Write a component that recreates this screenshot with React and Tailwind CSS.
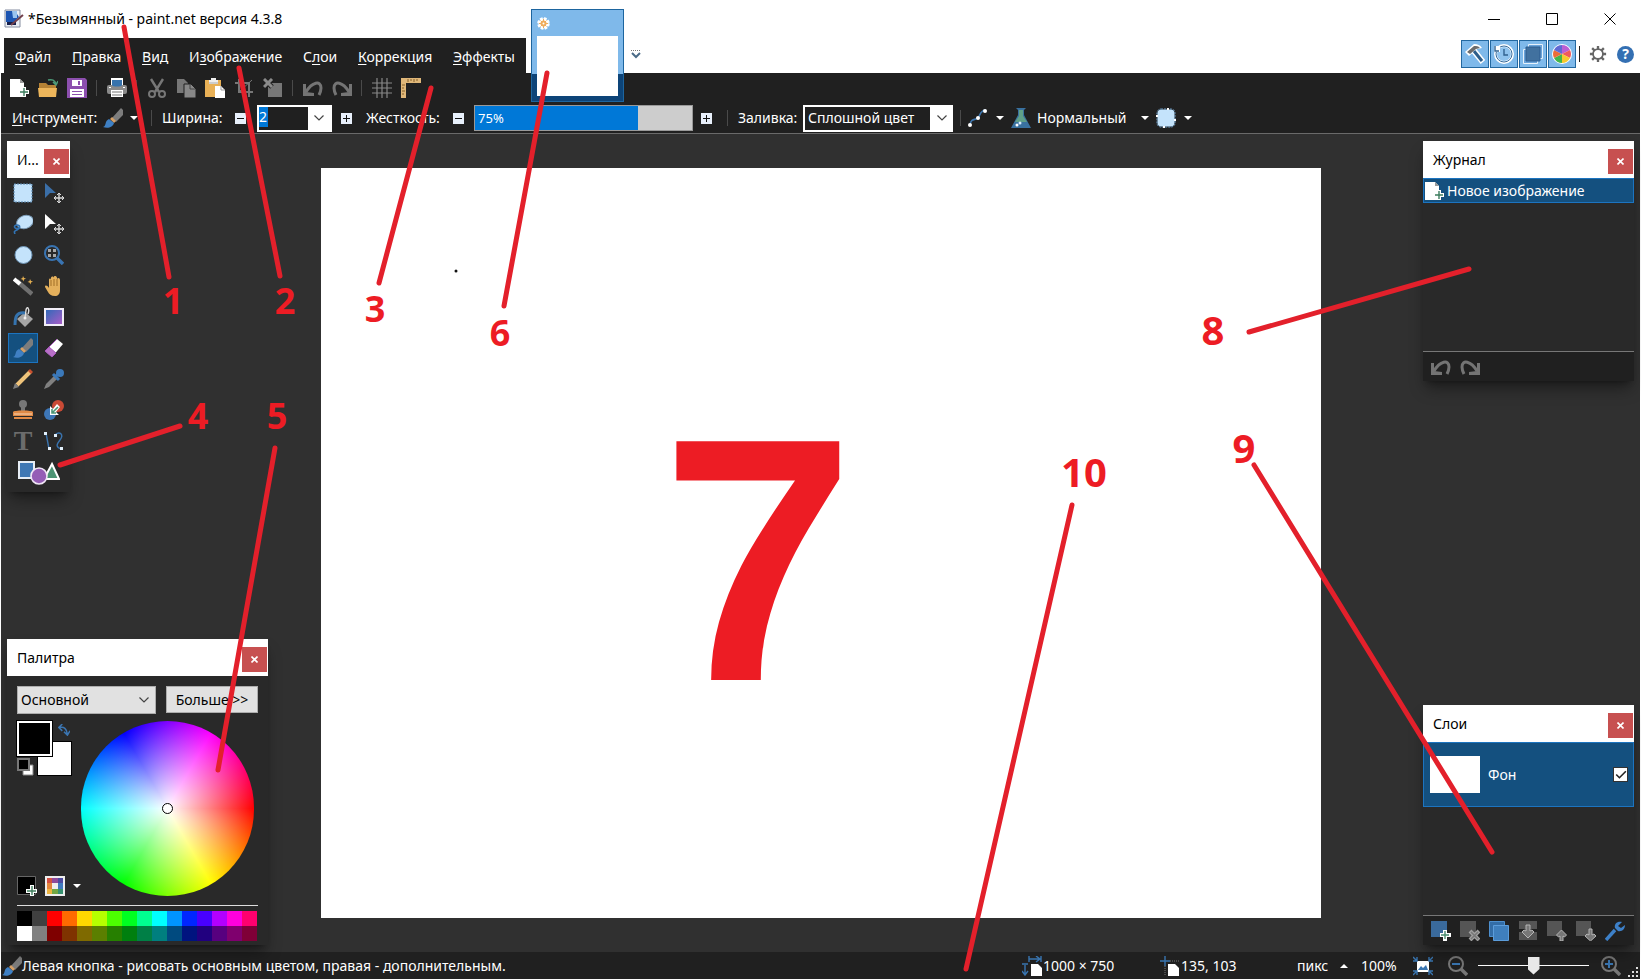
import React, { useState } from "react";

const Icon = ({ children, size = 20 }) => (
  <svg width={size} height={size} viewBox="0 0 20 20" fill="none" className="shrink-0">
    {children}
  </svg>
);

const NewIcon = () => (
  <Icon>
    <path d="M1 1h10l4 4v14H1z" fill="#fff" />
    <path d="M11 1l4 4h-4z" fill="#9a9a9a" />
    <path d="M15 9v10M10 14h10" stroke="#fff" strokeWidth="4" />
    <path d="M15 10v8M11 14h8" stroke="#3c7d5e" strokeWidth="1.4" />
  </Icon>
);

const OpenIcon = () => (
  <Icon>
    <path d="M1 5h7l2 2h8v4H1z" fill="#b58235" />
    <path d="M0 10h19l-1 9H1z" fill="#edb65b" />
    <path d="M10 2c4-1 7 0 8 4M15 4l3 3 2-4" stroke="#4c9a78" strokeWidth="1.5" />
  </Icon>
);

const SaveIcon = () => (
  <Icon>
    <path d="M0 0h18l2 2v18H0z" fill="#8c4fae" />
    <path d="M5 2h10v6H5zM3 11h14v8H3z" fill="#fff" />
    <path d="M11 3h2v4h-2z" fill="#8c4fae" />
    <path d="M5 13.500h10M5 16.500h10" stroke="#8c4fae" />
  </Icon>
);

const PrintIcon = () => (
  <Icon>
    <path d="M4 0h12v7H4z" fill="#fff" />
    <rect y="7" width="20" height="9" rx="2" fill="#8b8b8b" />
    <path d="M5 2h10v5c0 2-10 2-10 0z" fill="#3773ad" />
    <path d="M2 9h2v1H2zM16 9h2v1h-2z" fill="#fff" />
    <path d="M4 12h12v7H4z" fill="#fff" />
    <path d="M5 14h10M5 17h10" stroke="#777" />
  </Icon>
);

const CutIcon = () => (
  <Icon>
    <path d="M4 1l8 13M16 1L8 14" stroke="#777" strokeWidth="2.4" />
    <circle cx="5" cy="16" r="3" stroke="#777" strokeWidth="2" />
    <circle cx="15" cy="16" r="3" stroke="#777" strokeWidth="2" />
  </Icon>
);

const CopyIcon = () => (
  <Icon>
    <path d="M1 1h7l4 4v10H1z" fill="#777" />
    <path d="M8 6h7l5 5v9H8z" fill="#888" stroke="#202020" />
    <path d="M14 6v5h5" stroke="#444" />
  </Icon>
);

const PasteIcon = () => (
  <Icon>
    <path d="M0 2h16v17H0z" fill="#e8b056" />
    <path d="M4 2h2V0h5v2h2v4H4z" fill="#eee" />
    <path d="M4 5h9" stroke="#aaa" />
    <path d="M10 8h6l4 4v8H10z" fill="#fff" />
    <path d="M16 8v4h4" stroke="#999" />
  </Icon>
);

const CropIcon = () => (
  <Icon>
    <path d="M5 1v13h14M1 5h14v14" stroke="#777" strokeWidth="2" />
    <path d="M6 13L18 2" stroke="#777" />
  </Icon>
);

const DeselectIcon = () => (
  <Icon>
    <path d="M5 5h14v14H5z" fill="#777" />
    <path d="M1 1l8 8M9 1L1 9" stroke="#202020" strokeWidth="5" />
    <path d="M1 1l8 8M9 1L1 9" stroke="#8b8b8b" strokeWidth="3" />
  </Icon>
);

const UndoIcon = () => (
  <Icon>
    <path d="M3 14C9 4 18 2 18 10c0 3-1 5-2 7" stroke="#747474" strokeWidth="3" />
    <path d="M0 6h3v8l8 1v3H0z" fill="#747474" />
  </Icon>
);

const RedoIcon = () => (
  <Icon>
    <path d="M17 14C11 4 2 2 2 10c0 3 1 5 2 7" stroke="#747474" strokeWidth="3" />
    <path d="M20 6h-3v8l-8 1v3h11z" fill="#747474" />
  </Icon>
);

const GridIcon = () => (
  <Icon>
    <path d="M5 0v20M10 0v20M15 0v20M0 5h20M0 10h20M0 15h20" stroke="#888" strokeWidth="1.2" />
  </Icon>
);

const RulerIcon = () => (
  <Icon>
    <path d="M0 0h20v5H5v15H0z" fill="#dfb779" />
    <path d="M7 1v3M10 1v2M13 1v3M16 1v2M1 7h3M1 10h2M1 13h3M1 16h2" stroke="#86602b" />
  </Icon>
);

const BrushIcon = () => (
  <Icon>
    <path d="M18 0l2 2v5l-7 7-4-4z" fill="#7d7d7d" />
    <path d="M9 9l4 4-2 2-4-4z" fill="#d5a067" />
    <path d="M0 19c4-1 1-6 6-8l5 4c-1 4-6 6-11 4z" fill="#3f80c4" />
  </Icon>
);

const CurveIcon = () => (
  <Icon>
    <path d="M2 18c0-8 6-6 8-8s2-8 8-8" stroke="#3c74ac" strokeWidth="1.6" />
    <circle cx="2" cy="17" r="2" fill="#fff" />
    <circle cx="10" cy="10" r="2" fill="#fff" />
    <circle cx="17" cy="3" r="2" fill="#fff" />
  </Icon>
);

const FlaskIcon = () => (
  <Icon>
    <path d="M5 0h10l-2 2v5l7 13H0L7 7V2z" fill="#39719f" />
    <path d="M8 2h4v6l4 6H4l4-6z" fill="#5f9f87" />
    <circle cx="6" cy="17" r="1.5" fill="#fff" />
    <circle cx="9" cy="15" r="1.5" fill="#d6ebff" />
  </Icon>
);

const AntialiasIcon = () => (
  <Icon>
    <rect x="1.500" y="1.500" width="17" height="17" rx="4" fill="#c4e3fb" />
    <rect x="1" y="1" width="18" height="18" rx="4" stroke="#6f9fc8" strokeDasharray="2 1" />
    <path d="M11 0h2v2h-2zM7 18h2v2H7zM0 7h2v2H0zM18 11h2v2h-2z" fill="#fff" />
  </Icon>
);

const AppIcon = () => (
  <Icon>
    <path d="M1 1h15v17H1z" fill="#e9edf3" stroke="#858da0" />
    <path d="M2 2h9l4 6-5 5H2z" fill="#1c55b2" />
    <path d="M8 2h5v7H9z" fill="#9ac4ee" />
    <path d="M3 13h9v3H3z" fill="#151f4c" />
    <path d="M19 6L7 16" stroke="#71404c" strokeWidth="2" />
  </Icon>
);

/* ---- tool box icons ---- */

const RectSelectIcon = () => (
  <Icon>
    <path d="M1 1h18v18H1z" fill="#c4e3fb" stroke="#5a88b0" strokeDasharray="2 1" />
  </Icon>
);

const MoveIcon = ({ fill = "#3b6fa8" }) => (
  <Icon>
    <path d="M1 0l11 10H6l-5 5z" fill={fill} />
    <path d="M15 11v8M11 15h8" stroke="#d8d8d8" strokeWidth="1.4" />
    <path d="M13 12l2-2 2 2M13 18l2 2 2-2M12 13l-2 2 2 2M18 13l2 2-2 2" stroke="#d8d8d8" />
  </Icon>
);

const LassoIcon = () => (
  <Icon>
    <ellipse cx="12" cy="8" rx="8.5" ry="6.5" transform="rotate(-20 12 8)" fill="#c4e3fb" stroke="#7b9cb8" />
    <path d="M6 14c-5 2-6-3-2-3s3 4 0 5-3 2-2 4" stroke="#3274b5" strokeWidth="1.6" />
  </Icon>
);

const EllipseIcon = () => (
  <Icon>
    <circle cx="10.5" cy="10" r="8.5" fill="#c4e3fb" stroke="#6c93b5" />
  </Icon>
);

const ZoomToolIcon = () => (
  <Icon>
    <circle cx="8" cy="8" r="7" stroke="#3974b2" strokeWidth="2" />
    <path d="M13 13l6 6" stroke="#3974b2" strokeWidth="3.4" />
    <path d="M4 4h3v3H4zM9 4h3v3H9zM4 9h3v3H4zM9 9h3v3H9z" fill="#a8a8a8" />
  </Icon>
);

const WandIcon = () => (
  <Icon>
    <path d="M4 5l15 13" stroke="#707070" strokeWidth="4.4" />
    <path d="M1 3l6 5" stroke="#fff" strokeWidth="4" />
    <path d="M10 0l1 2 2 .5-2 1-.5 2-1-2-2-.5 2-1zM17 3l1 2 2 .5-2 1-.5 2-1-2-2-.5 2-1z" fill="#e5b051" />
  </Icon>
);

const HandIcon = () => (
  <Icon>
    <path d="M5 11V4c0-2 2-2 2 0V2c0-2 3-2 3 0V1c0-2 3-1 3 1v1c1-2 3-1 3 1v10c0 4-2 6-5 6-4 0-6-2-7-4l-3-5c0-2 2-2 4 1z" fill="#e4b05c" />
    <path d="M7 4v6M10 3v7M13 3v7" stroke="#a06f27" />
  </Icon>
);

const BucketIcon = () => (
  <Icon>
    <path d="M4 12l8-7 8 7-8 8z" fill="#a5a5a5" />
    <path d="M12 11l1-8c1-5 4-1 2 4" stroke="#ddd" strokeWidth="1.4" />
    <circle cx="12" cy="11" r="1.5" fill="#eee" />
    <path d="M12 6C4 5 2 9 2 18" stroke="#3573ae" strokeWidth="3" />
  </Icon>
);

const GradientIcon = () => (
  <Icon>
    <defs>
      <linearGradient id="toolGradient" x1="0" y1="0" x2="1" y2="1">
        <stop stopColor="#2a6ab8" />
        <stop offset="1" stopColor="#b05cc9" />
      </linearGradient>
    </defs>
    <path d="M1 2h18v16H1z" fill="url(#toolGradient)" stroke="#f2eef8" strokeWidth="2" />
  </Icon>
);

const EraserIcon = () => (
  <Icon>
    <path d="M13 1l6 5L8 19l-7-6z" fill="#fff" />
    <path d="M5 9l7 6-4 4-7-6z" fill="#b870c8" />
    <path d="M5 9l7 6-4 4-7-6 4-4 8-8" stroke="#a456b8" />
  </Icon>
);

const PencilIcon = () => (
  <Icon>
    <path d="M4 16L17 3" stroke="#efc37a" strokeWidth="4" />
    <path d="M15 2l2-2 3 3-2 2z" fill="#c9502f" />
    <path d="M0 20l2-6 4 4z" fill="#7e7e7e" />
  </Icon>
);

const PickerIcon = () => (
  <Icon>
    <path d="M0 20l2-5L10 7l3 3-8 8z" fill="#808080" />
    <path d="M9 5l6 6M12 7l5-5" stroke="#3b79ba" strokeWidth="3" />
    <circle cx="16" cy="4" r="4" fill="#3b79ba" />
  </Icon>
);

const StampIcon = () => (
  <Icon>
    <circle cx="10" cy="4" r="4" fill="#777" />
    <path d="M8 7h4v5H8z" fill="#777" />
    <path d="M0 12c0-2 20-2 20 0v4H0z" fill="#e08a46" />
    <path d="M1 14h18" stroke="#f6d3b5" />
    <path d="M1 17h18v2H1z" fill="#e08a46" />
  </Icon>
);

const RecolorIcon = () => (
  <Icon>
    <circle cx="14" cy="6" r="6" fill="#c94a35" />
    <circle cx="6" cy="14" r="6" fill="#3e76b6" />
    <path d="M6 6v9h9l-3-3 4-5-3-3-4 5z" fill="#fff" />
    <path d="M8 9v4h4M8 13l6-6" stroke="#4c9676" strokeWidth="1.6" />
  </Icon>
);

const LineToolIcon = () => (
  <Icon>
    <path d="M2 2l3 16M11 4c5-5 9 0 5 5s-4 7 1 9" stroke="#3a73ad" strokeWidth="1.4" />
    <path d="M0 1h3v3H0zM4 16h3v3H4zM10 3h3v3h-3zM16 16h3v3h-3z" fill="#e2f0fc" />
  </Icon>
);

const ShapesIcon = () => (
  <svg width="42" height="24" viewBox="0 0 42 24" fill="none">
    <path d="M1 1h15v16H1z" fill="#3f78b5" stroke="#e6edf5" strokeWidth="2" />
    <path d="M34 3l7 15H26z" fill="#4c9474" stroke="#fff" strokeWidth="2" />
    <circle cx="21" cy="15" r="8" fill="#955db6" stroke="#f0e6f6" strokeWidth="1.6" />
  </svg>
);

/* ---- layer icons ---- */

const AddLayerIcon = () => (
  <Icon>
    <path d="M0 0h16v16H0z" fill="#3a6a9c" />
    <path d="M14 9v11M9 14h11" stroke="#fff" strokeWidth="4" />
    <path d="M14 10v8M10 14h8" stroke="#478b6d" strokeWidth="1.4" />
  </Icon>
);

const DeleteLayerIcon = () => (
  <Icon>
    <path d="M0 0h16v16H0z" fill="#555" />
    <path d="M10 10l9 9M19 10l-9 9" stroke="#a0a0a0" strokeWidth="4" />
    <path d="M11 11l7 7M18 11l-7 7" stroke="#777" strokeWidth="1.5" />
  </Icon>
);

const DuplicateLayerIcon = () => (
  <Icon>
    <path d="M.5.500h15v15H.5z" fill="#336da7" stroke="#4d8fce" />
    <path d="M4.500 4.500h15v15h-15z" fill="#3f7fbd" stroke="#5c9ddb" />
  </Icon>
);

const LayerArrowIcon = ({ up, merge }) => (
  <Icon>
    {merge ? <path d="M1 0h18v8H1zM1 11h18v8H1z" fill="#555" /> : <path d="M0 0h15v15H0z" fill="#555" />}
    {up ? (
      <path d="M14.500 9l5 5-2 2-1.500-1v5h-3v-5l-1.500 1-2-2z" fill="#777" stroke="#b5b5b5" />
    ) : merge ? (
      <path d="M8 4h4v6l2-1 2 2-6 6-6-6 2-2 2 1z" fill="#777" stroke="#b5b5b5" />
    ) : (
      <path d="M13 8h3v6l2-1 2 2-5.500 5L9 15l2-2 2 1z" fill="#777" stroke="#b5b5b5" />
    )}
  </Icon>
);

const WrenchIcon = () => (
  <Icon>
    <path d="M1 19l9-10" stroke="#3d80c8" strokeWidth="3.4" />
    <path d="M17 1c-5-1-8 2-7 6l3 3c4 1 7-2 7-6l-4 3-3-2z" fill="#3d80c8" />
  </Icon>
);

/* ---- header icons ---- */

const HammerIcon = () => (
  <Icon>
    <path d="M9 7l9 11" stroke="#fff" strokeWidth="6" />
    <path d="M0 8L9 0c4 0 6 1 8 4l-5 1-8 7z" fill="#fff" />
    <path d="M9 7l8 10" stroke="#2c5d8a" strokeWidth="3" />
    <path d="M2 8l7-6c3 0 4 0 6 2l-4 1-6 5z" fill="#6c6c6c" />
  </Icon>
);

const HistoryIcon = () => (
  <Icon>
    <circle cx="10" cy="10" r="8.500" fill="#8fc3ee" stroke="#fff" strokeWidth="3" />
    <circle cx="10" cy="10" r="8" stroke="#376b9b" />
    <path d="M0 2h6v6H0z" fill="#fff" />
    <path d="M1 2v5h4M10 5v6h4" stroke="#31628f" strokeWidth="1.4" />
  </Icon>
);

const LayersIcon = () => (
  <Icon>
    <path d="M5.500.500h14v14h-14z" fill="#6ba3d8" stroke="#e6f1fb" />
    <path d="M.500 5.500h14v14h-14z" fill="#6ba3d8" stroke="#e6f1fb" />
    <path d="M3 3h14v14H3z" fill="#41719f" stroke="#2c5d90" />
  </Icon>
);

const PieIcon = () => (
  <Icon>
    <circle cx="10" cy="10" r="10" fill="#fff" />
    <path d="M10 10V1a9 9 0 0 1 8 5z" fill="#bb5fd2" />
    <path d="M10 10l8-4a9 9 0 0 1 0 8z" fill="#ef5a5a" />
    <path d="M10 10l8 4a9 9 0 0 1-8 5z" fill="#f8c92e" />
    <path d="M10 10v9a9 9 0 0 1-8-5z" fill="#42b54b" />
    <path d="M10 10l-8 4a9 9 0 0 1 0-8z" fill="#ec6d38" />
    <path d="M10 10L2 6a9 9 0 0 1 8-5z" fill="#6069d3" />
  </Icon>
);

const GearIcon = () => (
  <Icon size={18}>
    <circle cx="10" cy="10" r="5.500" stroke="#666" strokeWidth="2" />
    <path d="M10 1v4M10 15v4M1 10h4M15 10h4M3.500 3.500l3 3M13.500 13.500l3 3M16.500 3.500l-3 3M3.500 16.500l3-3" stroke="#666" strokeWidth="2.600" />
  </Icon>
);

/* ---- status icons ---- */

const SizeIcon = () => (
  <Icon>
    <path d="M9 8h7l4 4v8H9z" fill="#fff" />
    <path d="M7 3h11M14 0l4 3-4 3M7 0v6M19 0v6M3 9v10M0 15l3 4 3-4M0 8h6" stroke="#3975b0" strokeWidth="1.4" />
  </Icon>
);

const CursorPosIcon = () => (
  <Icon>
    <path d="M8 8h7l4 4v8H8z" fill="#fff" />
    <path d="M5 0v10M0 5h10" stroke="#3975b0" strokeWidth="1.400" />
    <path d="M10 5h10M5 10v10" stroke="#777" strokeDasharray="1 1" />
  </Icon>
);

const FitIcon = () => (
  <Icon>
    <path d="M4 5h12v11H4z" fill="#fff" />
    <path d="M5 14l3-4 2 2 3-3 2 5z" fill="#3975b0" />
    <path d="M0 1l4 4M20 1l-4 4M0 19l4-4M20 19l-4-4M0 5h4V1M20 5h-4V1M0 15h4v4M20 15h-4v4" stroke="#3975b0" strokeWidth="1.400" />
  </Icon>
);

const MagnifierIcon = ({ plus }) => (
  <Icon>
    <circle cx="8" cy="8" r="7" stroke="#777" strokeWidth="2" />
    <path d="M13 13l6 6" stroke="#777" strokeWidth="3.400" />
    <path d={plus ? "M4 8h8M8 4v8" : "M4 8h8"} stroke="#3975b0" strokeWidth="2" />
  </Icon>
);

const Chevron = ({ color = "#444" }) => (
  <svg width="10" height="6" viewBox="0 0 10 6" fill="none">
    <path d="M.500.500L5 5 9.500.500" stroke={color} strokeWidth="1.200" />
  </svg>
);

const Caret = ({ up }) => (
  <svg width="8" height="4" viewBox="0 0 8 4" className="shrink-0">
    <path d={up ? "M0 4h8L4 0z" : "M0 0h8L4 4z"} fill="#fff" />
  </svg>
);

const Separator = () => <span className="w-[2px] h-4 border-l border-[#4a4a4a] shrink-0"></span>;

const StepButton = ({ plus, label }) => (
  <button aria-label={label} className="w-[11px] h-[11px] bg-[#e8f0fb] shrink-0">
    <svg width="11" height="11" viewBox="0 0 11 11" className="block">
      <path d={plus ? "M2 5h7v1H2zM5 2h1v7H5z" : "M2 5h7v1H2z"} fill="#111" />
    </svg>
  </button>
);

const menus = [
  ["", "Ф", "айл"],
  ["", "П", "равка"],
  ["", "В", "ид"],
  ["И", "з", "ображение"],
  ["С", "л", "ои"],
  ["", "К", "оррекция"],
  ["", "Э", "ффекты"],
];

const toolbar = [
  { label: "Создать", icon: <NewIcon /> },
  { label: "Открыть", icon: <OpenIcon /> },
  { label: "Сохранить", icon: <SaveIcon /> },
  null,
  { label: "Печать", icon: <PrintIcon /> },
  null,
  { label: "Вырезать", icon: <CutIcon /> },
  { label: "Копировать", icon: <CopyIcon /> },
  { label: "Вставить", icon: <PasteIcon /> },
  { label: "Обрезать", icon: <CropIcon /> },
  { label: "Снять выделение", icon: <DeselectIcon /> },
  null,
  { label: "Отменить", icon: <UndoIcon /> },
  { label: "Вернуть", icon: <RedoIcon /> },
  null,
  { label: "Сетка", icon: <GridIcon /> },
  { label: "Линейки", icon: <RulerIcon /> },
];

const tools = [
  { label: "Выбор области", icon: <RectSelectIcon /> },
  { label: "Перемещение области", icon: <MoveIcon /> },
  { label: "Лассо", icon: <LassoIcon /> },
  { label: "Перемещение выделения", icon: <MoveIcon fill="#fff" /> },
  { label: "Овальная область", icon: <EllipseIcon /> },
  { label: "Масштаб", icon: <ZoomToolIcon /> },
  { label: "Волшебная палочка", icon: <WandIcon /> },
  { label: "Рука", icon: <HandIcon /> },
  { label: "Заливка", icon: <BucketIcon /> },
  { label: "Градиент", icon: <GradientIcon /> },
  { label: "Кисть", icon: <BrushIcon /> },
  { label: "Ластик", icon: <EraserIcon /> },
  { label: "Карандаш", icon: <PencilIcon /> },
  { label: "Пипетка", icon: <PickerIcon /> },
  { label: "Клонирование", icon: <StampIcon /> },
  { label: "Перекрашивание", icon: <RecolorIcon /> },
  { label: "Текст", icon: <span className="font-['Liberation_Serif',serif] font-bold text-[28px] leading-5 text-[#6c6c6c]">T</span> },
  { label: "Линия", icon: <LineToolIcon /> },
];

const swatches = [
  "#000000", "#404040", "#ff0000", "#ff6a00", "#ffd800", "#b6ff00", "#4cff00", "#00ff21",
  "#00ff90", "#00ffff", "#0094ff", "#0026ff", "#4800ff", "#b200ff", "#ff00dc", "#ff006e",
  "#ffffff", "#808080", "#7f0000", "#7f3300", "#7f6a00", "#5b7f00", "#267f00", "#007f0e",
  "#007f46", "#007f7f", "#004a7f", "#00137f", "#21007f", "#57007f", "#7f006e", "#7f0037",
];

const layerActions = [
  { label: "Добавить слой", icon: <AddLayerIcon /> },
  { label: "Удалить слой", icon: <DeleteLayerIcon /> },
  { label: "Дублировать слой", icon: <DuplicateLayerIcon /> },
  { label: "Объединить слои", icon: <LayerArrowIcon merge /> },
  { label: "Поднять слой", icon: <LayerArrowIcon up /> },
  { label: "Опустить слой", icon: <LayerArrowIcon /> },
  { label: "Свойства слоя", icon: <WrenchIcon /> },
];

const callouts = [
  { n: 1, x: 173, y: 314, line: [124, 27, 169, 277] },
  { n: 2, x: 285, y: 314, line: [239, 68, 280, 276] },
  { n: 3, x: 375, y: 322, line: [431, 88, 379, 283] },
  { n: 4, x: 198, y: 429, line: [180, 426, 60, 465] },
  { n: 5, x: 277, y: 429, line: [275, 448, 218, 770] },
  { n: 6, x: 500, y: 346, line: [547, 73, 504, 306] },
  { n: 8, x: 1213, y: 345, line: [1249, 332, 1469, 269], big: true },
  { n: 9, x: 1244, y: 463, line: [1254, 465, 1492, 852], big: true },
  { n: 10, x: 1084, y: 487, line: [1072, 505, 966, 969], big: true },
];

const PanelTitle = ({ title }) => (
  <div className="h-[37px] bg-white flex items-center justify-between pl-[10px] pr-px text-black">
    <h2 className="text-sm">{title}</h2>
    <button
      aria-label="Закрыть"
      className="w-[25px] h-[25px] mt-1 bg-[#c75050] flex items-center justify-center shrink-0"
    >
      <svg width="7" height="7" viewBox="0 0 7 7">
        <path d="M.500.500l6 6M6.500.500l-6 6" stroke="#fff" strokeWidth="1.600" />
      </svg>
    </button>
  </div>
);

const Header = () => (
  <header className="h-[73px] flex bg-white shrink-0 relative z-10">
    <div className="pl-1">
      <div className="h-[38px] flex items-center gap-1">
        <AppIcon />
        <h1 className="text-black text-sm">*Безымянный - paint.net версия 4.3.8</h1>
      </div>
      <nav className="h-[35px] bg-[#202020] flex items-center pl-[3px] w-[522px] justify-between pr-[3px]">
        {menus.map(([before, key, after]) => (
          <button key={key + after} className="px-2 pt-[3px] h-full">
            {before}
            <u className="underline-offset-2">{key}</u>
            {after}
          </button>
        ))}
      </nav>
    </div>
    <div className="pt-[9px] pl-[5px] flex gap-[7px]">
      <button
        aria-label="Безымянный"
        className="w-[93px] h-[93px] border border-[#1d659f] bg-linear-to-b from-[#7fb9ea] from-[64px] to-[#0d4478] to-[64px] px-[5px] pt-[7px] flex flex-col gap-[6px]"
      >
        <svg width="13" height="13" viewBox="0 0 13 13">
          <circle cx="6.500" cy="6.500" r="5" fill="#fff" stroke="#fff" strokeWidth="2.600" strokeDasharray="2.600 1.300" />
          <circle cx="6.500" cy="6.500" r="3" fill="#efac5c" />
          <path d="M6.500 2v9M2 6.500h9M3.500 3.500l6 6M9.500 3.500l-6 6" stroke="#efac5c" />
          <circle cx="6.500" cy="6.500" r="1" fill="#fff" />
        </svg>
        <span className="w-full h-[60px] bg-white"></span>
      </button>
      <button aria-label="Список изображений" className="h-3 mt-10">
        <svg width="10" height="10" viewBox="0 0 10 10" fill="none">
          <path d="M0 .500h10" stroke="#777" strokeDasharray="1 1" />
          <path d="M1 3l4 4 4-4" stroke="#4b6b87" strokeWidth="2" />
        </svg>
      </button>
    </div>
    <div className="ml-auto flex flex-col items-end pr-px">
      <div className="h-[38px] flex">
        {["M0 6.500h12", "M.500.500h11v11H.500z", "M.500.500l11 11M11.500.500l-11 11"].map((d, i) => (
          <button
            key={d}
            aria-label={["Свернуть", "Развернуть", "Закрыть"][i]}
            className="w-[58px] flex items-center justify-center"
          >
            <svg width="12" height="12" viewBox="0 0 12 12" fill="none">
              <path d={d} stroke="#000" />
            </svg>
          </button>
        ))}
      </div>
      <div className="flex items-center mt-[2px] pr-[5px]">
        <div className="flex gap-px">
          {[<HammerIcon />, <HistoryIcon />, <LayersIcon />, <PieIcon />].map((icon, i) => (
            <button
              key={i}
              aria-label={["Инструменты", "Журнал", "Слои", "Палитра"][i]}
              className="w-7 h-7 border border-[#2368a0] bg-[#7fb9ea] flex items-center justify-center"
            >
              {icon}
            </button>
          ))}
        </div>
        <span className="w-px h-4 bg-[#222] ml-[3px] mr-[9px]"></span>
        <button aria-label="Настройки">
          <GearIcon />
        </button>
        <button className="w-[17px] h-[17px] ml-[10px] rounded-full bg-[#3470b3] text-white text-sm leading-4 font-bold">
          ?
        </button>
      </div>
    </div>
  </header>
);

const Toolbars = () => {
  const [hardness, setHardness] = useState(75);
  return (
    <div className="bg-[#202020] h-[61px] border-b border-[#6a6a6a] ml-px shrink-0">
      <div className="h-[30px] flex items-center gap-[9px] pl-2">
        {toolbar.map((el, i) =>
          el ? (
            <button key={i} aria-label={el.label}>
              {el.icon}
            </button>
          ) : (
            <Separator key={i} />
          )
        )}
      </div>
      <div className="h-[30px] flex items-center">
        <div className="flex items-center w-[150px] pl-[11px]">
          <span className="w-[91px]">
            <u className="underline-offset-2">И</u>нструмент:
          </span>
          <button aria-label="Инструмент" className="flex items-center gap-[7px]">
            <BrushIcon />
            <Caret />
          </button>
        </div>
        <Separator />
        <div className="flex items-center pl-[9px]">
          <label htmlFor="width" className="w-[73px]">
            Ширина:
          </label>
          <StepButton label="Уменьшить ширину" />
          <div className="w-[75px] h-[27px] ml-[11px] mr-[9px] bg-white flex p-[2px]">
            <div className="flex-1 bg-[#202020] flex items-start">
              <input id="width" defaultValue="2" className="w-[9px] h-5 bg-[#0078d7] outline-0" />
            </div>
            <button aria-label="Выбрать ширину" className="w-[22px] flex items-center justify-center">
              <Chevron />
            </button>
          </div>
          <StepButton plus label="Увеличить ширину" />
        </div>
        <div className="flex items-center pl-[14px]">
          <label htmlFor="hardness" className="w-[87px]">
            Жесткость:
          </label>
          <StepButton label="Уменьшить жесткость" />
          <div className="relative w-[219px] h-[26px] ml-[10px] mr-2">
            <input
              id="hardness"
              type="range"
              value={hardness}
              onChange={(e) => setHardness(Number(e.target.value))}
              style={{ background: `linear-gradient(90deg, #0078d7 ${hardness}%, #cdcdcd ${hardness}%)` }}
              className="appearance-none block w-full h-full border border-[#999] [&::-webkit-slider-thumb]:appearance-none"
            />
            <span className="absolute left-1 top-[3px] text-[13px] leading-5">{hardness}%</span>
          </div>
          <StepButton plus label="Увеличить жесткость" />
        </div>
        <div className="flex items-center pl-[15px]">
          <Separator />
          <label htmlFor="fill" className="w-[65px] ml-[9px]">
            Заливка:
          </label>
          <div className="relative w-[150px] h-[27px] mr-[7px]">
            <select
              id="fill"
              className="appearance-none w-full h-full border-2 border-white bg-[#202020] pl-[3px] outline-0 leading-5"
            >
              <option>Сплошной цвет</option>
            </select>
            <span className="absolute right-0 top-0 w-[23px] h-full bg-white flex items-center justify-center pointer-events-none">
              <Chevron />
            </span>
          </div>
          <Separator />
          <button aria-label="Кривая" className="flex items-center gap-2 ml-[6px]">
            <CurveIcon />
            <Caret />
          </button>
          <button className="flex items-center ml-[7px]">
            <FlaskIcon />
            <span className="w-[104px] text-left ml-[6px]">Нормальный</span>
            <Caret />
          </button>
          <button aria-label="Сглаживание" className="flex items-center gap-2 ml-[7px]">
            <AntialiasIcon />
            <Caret />
          </button>
        </div>
      </div>
    </div>
  );
};

const ToolsPanel = () => (
  <section className="absolute left-[6px] top-[7px] w-[63px] h-[351px] bg-[#292929] shadow-lg shadow-black/40">
    <PanelTitle title="И..." />
    <div className="grid grid-cols-2 gap-px px-px">
      {tools.map((tool) => (
        <button
          key={tool.label}
          aria-label={tool.label}
          className={`h-[30px] flex items-center justify-center ${
            tool.label === "Кисть" ? "bg-[#14507f] border border-[#1c74c0]" : ""
          }`}
        >
          {tool.icon}
        </button>
      ))}
    </div>
    <button aria-label="Фигуры" className="ml-[11px] mt-[5px]">
      <ShapesIcon />
    </button>
  </section>
);

const PalettePanel = () => (
  <section className="absolute left-[6px] bottom-[7px] w-[261px] h-[306px] bg-[#292929] shadow-lg shadow-black/40">
    <PanelTitle title="Палитра" />
    <div className="px-[10px] pt-[10px]">
      <div className="flex justify-between text-black">
        <div className="relative w-[139px] h-7">
          <select
            aria-label="Цвет"
            className="appearance-none w-full h-full bg-[#e1e1e1] border border-[#adadad] pl-[3px] leading-5 outline-0"
          >
            <option>Основной</option>
          </select>
          <span className="absolute right-[7px] top-[11px] pointer-events-none">
            <Chevron />
          </span>
        </div>
        <button className="w-[92px] h-[27px] bg-[#e1e1e1] border border-[#adadad]">Больше &gt;&gt;</button>
      </div>
      <div className="flex justify-between mt-[7px] pr-1">
        <div className="flex flex-col justify-between">
          <div className="relative w-[55px] h-[55px]">
            <button aria-label="Дополнительный цвет" className="absolute right-0 bottom-0 w-[35px] h-[35px] bg-white border border-black"></button>
            <button aria-label="Основной цвет" className="absolute left-0 top-0 w-[35px] h-[35px] bg-black border-2 border-white outline outline-black"></button>
            <button aria-label="Поменять цвета" className="absolute right-[2px] top-[3px]">
              <svg width="12" height="12" viewBox="0 0 14 14" fill="none">
                <path d="M2 4c5-1 8 1 9 8M5 0L1 4l4 4M7 9l4 4 3-5" stroke="#3b75b1" strokeWidth="1.800" />
              </svg>
            </button>
            <button aria-label="Сбросить цвета" className="absolute left-0 bottom-0">
              <svg width="17" height="18" viewBox="0 0 17 18" className="block">
                <path d="M6 7h10v10H6z" fill="#fff" stroke="#888" />
                <path d="M1 1h11v11H1z" stroke="#777" strokeWidth="2" />
              </svg>
            </button>
          </div>
          <div className="flex items-center gap-2">
            <button aria-label="Добавить цвет">
              <Icon>
                <path d="M.500.500h18v18h-18z" fill="#000" stroke="#666" />
                <path d="M15 9v11M9 15h11" stroke="#fff" strokeWidth="4" />
                <path d="M15 10v9M10 15h9" stroke="#41805f" strokeWidth="1.400" />
              </Icon>
            </button>
            <button aria-label="Палитры" className="flex items-center gap-2">
              <Icon>
                <path d="M0 0h20v20H0z" fill="#eee" />
                <path d="M2 2h5v5H2z" fill="#d34f42" />
                <path d="M7 2h6v5H7z" fill="#8e4a9b" />
                <path d="M13 2h5v5h-5z" fill="#4b4aa0" />
                <path d="M2 7h5v6H2z" fill="#e3863c" />
                <path d="M13 7h5v6h-5z" fill="#3f79bd" />
                <path d="M2 13h5v5H2z" fill="#edb541" />
                <path d="M7 13h6v5H7z" fill="#72a743" />
                <path d="M13 13h5v5h-5z" fill="#369170" />
              </Icon>
              <Caret />
            </button>
          </div>
        </div>
        <div className="w-[175px] h-[175px] rounded-full bg-[radial-gradient(closest-side,white,transparent),conic-gradient(from_90deg,red,yellow,lime,cyan,blue,magenta,red)] flex items-center justify-center">
          <span className="w-[11px] h-[11px] rounded-full border border-black bg-white"></span>
        </div>
      </div>
      <div className="border-t border-[#ddd] mt-[9px] pt-[5px]">
        <div className="grid grid-cols-[repeat(16,15px)]">
          {swatches.map((color) => (
            <button key={color} aria-label={color} className="h-[15px]" style={{ backgroundColor: color }}></button>
          ))}
        </div>
      </div>
    </div>
  </section>
);

const HistoryPanel = () => (
  <section className="absolute right-[6px] top-[7px] w-[211px] h-[240px] bg-[#292929] shadow-lg shadow-black/40 flex flex-col">
    <PanelTitle title="Журнал" />
    <button className="h-[25px] bg-[#14507f] border border-[#1c74c0] flex items-center gap-[3px]">
      <NewIcon />
      Новое изображение
    </button>
    <div className="mt-auto h-[30px] border-t border-[#777] bg-[#202020] flex items-center gap-[9px] pl-2">
      <button aria-label="Отменить">
        <UndoIcon />
      </button>
      <button aria-label="Вернуть">
        <RedoIcon />
      </button>
    </div>
  </section>
);

const LayersPanel = () => (
  <section className="absolute right-[6px] bottom-[7px] w-[211px] h-[240px] bg-[#292929] shadow-lg shadow-black/40 flex flex-col">
    <PanelTitle title="Слои" />
    <label className="h-[65px] bg-[#14507f] border border-[#1c74c0] flex items-center gap-2 pl-[6px] pr-[5px]">
      <span className="w-[50px] h-[37px] bg-white"></span>
      <span className="flex-1">Фон</span>
      <span className="relative w-[15px] h-[15px]">
        <input type="checkbox" defaultChecked className="peer appearance-none block w-full h-full bg-white border border-[#333]" />
        <svg width="15" height="15" viewBox="0 0 14 14" fill="none" className="absolute inset-0 invisible peer-checked:visible pointer-events-none">
          <path d="M3 7l3 3 6-6" stroke="#222" strokeWidth="1.500" />
        </svg>
      </span>
    </label>
    <div className="mt-auto h-[30px] border-t border-[#777] bg-[#202020] flex items-center gap-[9px] pl-2">
      {layerActions.map((el) => (
        <button key={el.label} aria-label={el.label}>
          {el.icon}
        </button>
      ))}
    </div>
  </section>
);

const StatusBar = () => (
  <footer className="h-7 bg-[#202020] flex items-center ml-px pl-px pr-[2px] shrink-0 border-b border-white">
    <BrushIcon />
    <p>Левая кнопка - рисовать основным цветом, правая - дополнительным.</p>
    <div className="ml-auto flex items-center">
      <div className="flex items-center gap-px w-[138px]">
        <SizeIcon />
        1000 × 750
      </div>
      <div className="flex items-center gap-px w-[137px]">
        <CursorPosIcon />
        135, 103
      </div>
      <button className="flex items-center gap-3 w-[64px]">
        пикс
        <Caret up />
      </button>
      <span className="w-[52px]">100%</span>
      <button aria-label="По размеру окна">
        <FitIcon />
      </button>
      <button aria-label="Уменьшить" className="ml-[15px] mr-[10px]">
        <MagnifierIcon />
      </button>
      <input
        type="range"
        aria-label="Масштаб"
        defaultValue="50"
        className="appearance-none w-[111px] h-5 bg-[linear-gradient(white,white)] bg-[length:100%_1px] bg-center bg-no-repeat [&::-webkit-slider-thumb]:appearance-none [&::-webkit-slider-thumb]:w-3 [&::-webkit-slider-thumb]:h-[18px] [&::-webkit-slider-thumb]:bg-[#e8e8e8] [&::-webkit-slider-thumb]:[clip-path:polygon(0_0,100%_0,100%_70%,50%_100%,0_70%)]"
      />
      <button aria-label="Увеличить" className="ml-3 mr-[7px]">
        <MagnifierIcon plus />
      </button>
      <svg width="10" height="10" viewBox="0 0 10 10" className="mt-3">
        <path d="M8 0h2v2H8zM4 4h2v2H4zM8 4h2v2H8zM0 8h2v2H0zM4 8h2v2H4zM8 8h2v2H8z" fill="#ddd" />
      </svg>
    </div>
  </footer>
);

// numbered marks drawn over the whole window
const Callouts = () => (
  <svg className="absolute inset-0 w-full h-full z-20 pointer-events-none font-['Noto_Sans',sans-serif] font-bold" fill="#ed1c24">
    {callouts.map(({ n, x, y, line: [x1, y1, x2, y2], big }) => (
      <g key={n}>
        <line x1={x1} y1={y1} x2={x2} y2={y2} stroke="#e3202b" strokeWidth="5" strokeLinecap="round" />
        <text x={x} y={y} textAnchor="middle" fontSize={big ? 40 : 36}>
          {n}
        </text>
      </g>
    ))}
    <text x="758" y="680" textAnchor="middle" fontSize="347" className="font-['Liberation_Sans',sans-serif]">
      7
    </text>
    <circle cx="456" cy="271" r="1.500" fill="#111" />
  </svg>
);

const App = () => {
  return (
    <div className="h-screen flex flex-col relative overflow-hidden bg-white pr-px text-white text-sm font-['Noto_Sans',sans-serif]">
      <Header />
      <Toolbars />
      <main className="flex-1 min-h-0 relative bg-[#303030] flex items-center justify-center ml-px">
        <div className="w-[1000px] h-[750px] bg-white"></div>
        <ToolsPanel />
        <PalettePanel />
        <HistoryPanel />
        <LayersPanel />
      </main>
      <StatusBar />
      <Callouts />
    </div>
  );
};

export default App;
